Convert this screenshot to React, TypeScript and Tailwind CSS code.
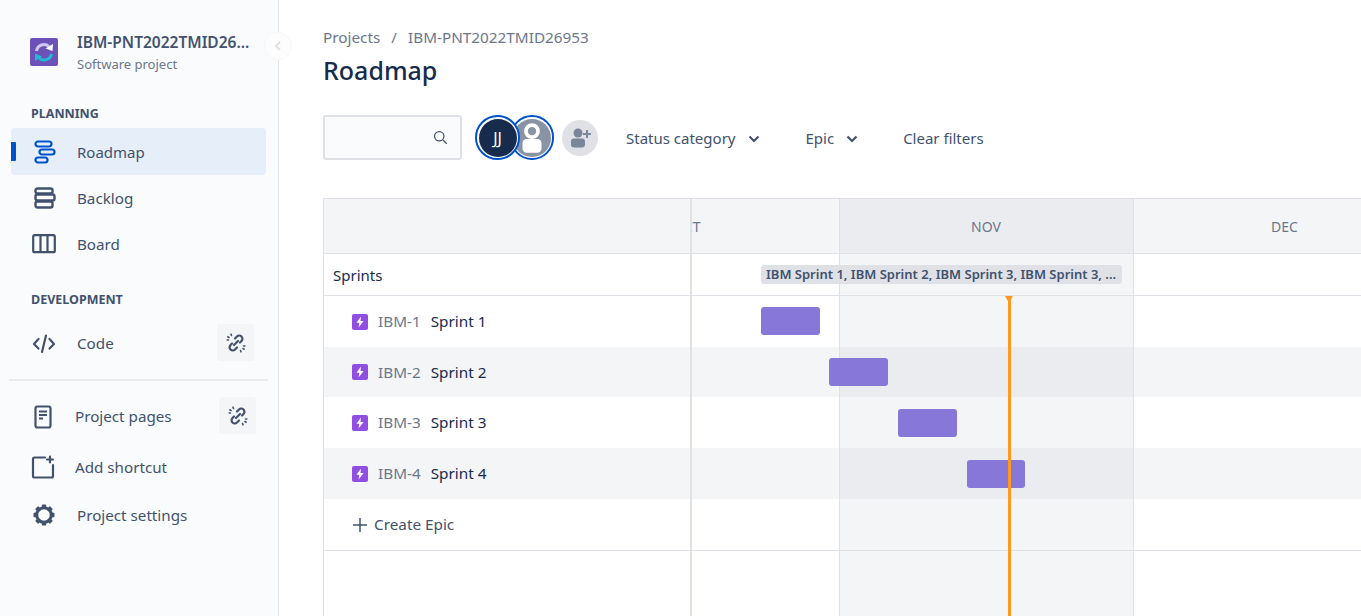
import type { ReactNode } from "react";

const font = { fontFamily: '"Noto Sans", sans-serif' };

const Svg = ({ children, className = "" }: { children: ReactNode; className?: string }) => (
  <svg viewBox="0 0 24 24" fill="none" stroke="currentColor" strokeWidth="2" className={className}>
    {children}
  </svg>
);

const RoadmapIcon = () => (
  <svg width="24" height="24" viewBox="0 0 24 24" fill="none" stroke="currentColor" strokeWidth="2.2">
    <rect x="2.5" y="1.5" width="16" height="5" rx="2.5" />
    <rect x="6.5" y="9.5" width="15" height="5" rx="2.5" />
    <rect x="2.5" y="17.5" width="12" height="5" rx="2.5" />
  </svg>
);

const BacklogIcon = () => (
  <svg width="24" height="24" viewBox="0 0 24 24" fill="none" stroke="currentColor" strokeWidth="2.4">
    <rect x="3.5" y="2.5" width="17" height="5" rx="2" />
    <rect x="3.5" y="8.500" width="19" height="6" rx="2" />
    <rect x="3.5" y="15.500" width="17" height="6" rx="2" />
  </svg>
);

const BoardIcon = () => (
  <svg width="24" height="20" viewBox="0 0 24 20" fill="none" stroke="currentColor" strokeWidth="2.2">
    <rect x="1.2" y="1.2" width="21.6" height="17" rx="1.5" />
    <path d="M8.5 1.5v16.5M15.5 1.5v16.5" />
  </svg>
);

const CodeIcon = () => (
  <svg width="24" height="24" viewBox="0 0 24 24" fill="none" stroke="currentColor" strokeWidth="2.2" strokeLinecap="round" strokeLinejoin="round">
    <path d="M6.5 7 2 12l4.500 4.500M17.500 7 22 12l-4.500 4.500M14 3.500 10 20" />
  </svg>
);

const PagesIcon = () => (
  <svg width="24" height="24" viewBox="0 0 24 24" fill="none" stroke="currentColor" strokeWidth="2.200">
    <rect x="4.500" y="1.500" width="15" height="21" rx="2" />
    <path d="M8 6.500h8M8 10h8M8 13.500h4" />
  </svg>
);

const ShortcutIcon = () => (
  <svg width="24" height="24" viewBox="0 0 24 24" fill="none" stroke="currentColor" strokeWidth="2.200" strokeLinecap="round">
    <path d="M14 2.500H3.500a1.500 1.500 0 0 0-1.500 1.500v17a1.500 1.500 0 0 0 1.500 1.500h17a1.500 1.500 0 0 0 1.500-1.500V10" />
    <path d="M19 1.500v6M16 4.500h6" />
  </svg>
);

const GearIcon = () => (
  <svg width="22" height="22" viewBox="0 0 22 22" fill="currentColor">
    <circle cx="11" cy="11" r="7.300" fill="none" stroke="currentColor" strokeWidth="3" />
    {[0, 45, 90, 135, 180, 225, 270, 315].map((deg) => (
      <rect key={deg} x="8.800" y="0.500" width="4.400" height="4.500" rx="1" transform={`rotate(${deg} 11 11)`} />
    ))}
  </svg>
);

const UnlinkButton = ({ className = "" }: { className?: string }) => (
  <div className={`flex h-[37px] w-[37px] items-center justify-center rounded-[3px] bg-[#f4f5f7] text-[#42526e] ${className}`}>
    <svg width="20" height="20" viewBox="0 0 20 20" fill="none" stroke="currentColor" strokeWidth="2.200" strokeLinecap="round">
      <path d="M9 5.500 11 3.500a3.200 3.200 0 0 1 4.500 0 3.200 3.200 0 0 1 0 4.500l-1.500 1.500M11 14.500 9 16.500a3.200 3.200 0 0 1-4.500 0 3.200 3.200 0 0 1 0-4.500L6 10.500M8 12l4-4" />
      <path d="M3 4.500 1.800 3.800M5.500 2.500 5 1.200M2.500 7H1.200M17 15.500l1.200.7M14.500 17.500l.5 1.300M17.500 13h1.300" strokeWidth="1.600" />
    </svg>
  </div>
);

const Chevron = ({ className = "" }: { className?: string }) => (
  <svg width="12" height="8" viewBox="0 0 12 8" fill="none" stroke="currentColor" strokeWidth="2.200" className={className}>
    <path d="m1.500 1.500 4.500 4.500 4.500-4.500" />
  </svg>
);

const NavItem = ({
  icon,
  label,
  iconWidth = "w-[66px]",
  height = "h-[46px]",
  iconClass = "pl-[21px]",
  children,
}: {
  icon: ReactNode;
  label: string;
  iconWidth?: string;
  height?: string;
  iconClass?: string;
  children?: ReactNode;
}) => (
  <div className={`flex items-center text-[#42526e] ${height}`}>
    <div className={`flex shrink-0 items-center ${iconWidth} ${iconClass}`}>{icon}</div>
    <span className="text-[15.200px]">{label}</span>
    {children}
  </div>
);

const Sidebar = () => (
  <aside className="relative flex h-full w-[279px] shrink-0 flex-col border-r border-[#e4e6ea] bg-[#fafbfc] pl-[11px] pr-[12px]">
    <div className="flex items-center pl-[19px] pt-[32px]">
      <svg width="28" height="28" viewBox="0 0 28 28" className="shrink-0">
        <rect width="28" height="28" rx="2" fill="#6c51b8" />
        <path d="M6.500 13a7.500 7.500 0 0 1 12.500-4.500" fill="none" stroke="#cfc6f2" strokeWidth="3" />
        <path d="M15.500 10.500 22.500 13l.5-7z" fill="#fff" />
        <path d="M21.500 16a7.500 7.500 0 0 1-12.500 4" fill="none" stroke="#22b8d6" strokeWidth="3" />
        <path d="M12 18.500 5 15.500v7.500z" fill="#22b8d6" />
      </svg>
      <div className="ml-[19px] flex flex-col">
        <span className="text-[15.500px] leading-[20px] font-semibold whitespace-nowrap text-[#42526e]">IBM-PNT2022TMID26...</span>
        <span className="mt-[4px] text-[13px] leading-[16px] text-[#6b778c]">Software project</span>
      </div>
    </div>

    <div className="mt-[34px] pl-[20px] text-[12.500px] leading-[16px] font-bold text-[#42526e]">PLANNING</div>
    <div className="relative mt-[6px] flex h-[47px] w-[255px] items-center rounded-[4px] bg-[#e6eff9] text-[#0052cc]">
      <span className="absolute top-[14px] left-0 h-[19px] w-[5px] rounded-r-[1px] bg-[#0052cc]" />
      <div className="flex w-[66px] shrink-0 pl-[22px]">
        <RoadmapIcon />
      </div>
      <span className="pt-[2px] text-[15px] text-[#42526e]">Roadmap</span>
    </div>
    <div>
      <NavItem icon={<BacklogIcon />} label="Backlog" />
      <NavItem icon={<BoardIcon />} label="Board" />
    </div>

    <div className="mt-[25px] pl-[20px] text-[12.500px] leading-[16px] font-bold text-[#42526e]">DEVELOPMENT</div>
    <NavItem icon={<CodeIcon />} label="Code" height="h-[37px] mt-[17px]">
      <UnlinkButton className="ml-auto mr-[12px] -mt-[2px]" />
    </NavItem>
    <div className="-ml-[2px] mt-[17px] h-[2px] w-[259px] bg-[#e9ebee]" />
    <div className="mt-[17px]">
      <NavItem icon={<PagesIcon />} label="Project pages" iconWidth="w-[64px]" iconClass="pl-[20px]" height="h-[37px]">
        <UnlinkButton className="ml-auto mr-[10px] -mt-[2px]" />
      </NavItem>
      <NavItem icon={<ShortcutIcon />} label="Add shortcut" iconWidth="w-[64px]" iconClass="pl-[20px]" height="h-[24px] mt-[20px]" />
      <NavItem icon={<GearIcon />} label="Project settings" iconWidth="w-[66px]" iconClass="pl-[22px]" height="h-[24px] mt-[24px]" />
    </div>

    <div className="absolute top-[32px] -right-[14px] flex h-[28px] w-[28px] items-center justify-center rounded-full border border-[#f6f7f8] bg-[#fdfdfe]">
      <svg width="8" height="10" viewBox="0 0 8 10" fill="none" stroke="#dfe1e6" strokeWidth="2">
        <path d="M6 1 2 5l4 4" />
      </svg>
    </div>
  </aside>
);

const Toolbar = () => (
  <div className="mt-[28px] flex items-center">
    <div className="flex h-[45px] w-[139px] items-center justify-end rounded-[3px] border-2 border-[#dfe1e6] bg-[#fafbfc] pr-[12px] text-[#42526e]">
      <Svg className="h-[15px] w-[15px]">
        <circle cx="10" cy="10" r="7.500" />
        <path d="m16 16 6 6" />
      </Svg>
    </div>
    <div className="ml-[13px] flex items-center">
      <div className="z-10 flex h-[45px] w-[45px] items-center justify-center rounded-full border-2 border-[#0052cc] bg-white">
        <div className="flex h-[38px] w-[38px] items-center justify-center rounded-full bg-[#172b4d] text-[16px] text-white">JJ</div>
      </div>
      <div className="-ml-[10px] flex h-[45px] w-[44px] items-center justify-center rounded-full border-2 border-[#0052cc] bg-white">
        <div className="flex h-[38px] w-[38px] items-center justify-center overflow-hidden rounded-full bg-[#8993a4]">
          <svg width="38" height="38" viewBox="0 0 36 36" fill="#fff">
            <path fillRule="evenodd" d="M18 4a7.500 7.500 0 1 1 0 15 7.500 7.500 0 0 1 0-15zm0 3.500a4 4 0 1 0 0 8 4 4 0 0 0 0-8z" />
            <rect x="9" y="19" width="18" height="13" rx="4" />
          </svg>
        </div>
      </div>
      <div className="ml-[8px] flex h-[36px] w-[36px] items-center justify-center rounded-full bg-[#dfe1e6]">
        <svg width="24" height="24" viewBox="0 0 24 24" fill="#7a869a">
          <circle cx="10" cy="7" r="4.500" />
          <rect x="3" y="12.500" width="14" height="9" rx="3" />
          <path d="M18 4h2v3h3v2h-3v3h-2V9h-3V7h3z" />
        </svg>
      </div>
    </div>
    <div className="ml-[28px] flex items-center pt-[2px] text-[15px] text-[#42526e]">
      <span>Status category</span>
      <Chevron className="ml-[13px]" />
      <span className="ml-[45px]">Epic</span>
      <Chevron className="ml-[12px]" />
      <span className="ml-[45px]">Clear filters</span>
    </div>
  </div>
);

const EpicIcon = () => (
  <div className="flex h-[16px] w-[16px] items-center justify-center rounded-[2px] bg-[#904ee2]">
    <svg width="12" height="12" viewBox="0 0 10 10" fill="#fff">
      <path d="M5.800 0.500 2 5.700h2.400L3.800 9.500 8 4.200H5.400z" />
    </svg>
  </div>
);

const rows = [
  { key: "IBM-1", name: "Sprint 1", h: "h-[51px]", shaded: false, bar: "left-[69px] top-[11px] w-[59px]" },
  { key: "IBM-2", name: "Sprint 2", h: "h-[50px]", shaded: true, bar: "left-[137px] top-[11px] w-[59px]" },
  { key: "IBM-3", name: "Sprint 3", h: "h-[51px]", shaded: false, bar: "left-[206px] top-[12px] w-[59px]" },
  { key: "IBM-4", name: "Sprint 4", h: "h-[51px]", shaded: true, bar: "left-[275px] top-[12px] w-[58px]" },
];

const Cells = ({ shaded = false, nov = "bg-[#f4f5f7]", children }: { shaded?: boolean; nov?: string; children?: ReactNode }) => (
  <div className={`relative flex h-full flex-1 border-l-2 border-[#dfe1e6] ${shaded ? "bg-[#f4f5f7]" : ""}`}>
    <div className="w-[147px] shrink-0" />
    <div className={`w-[295px] shrink-0 border-x border-[#dfe1e6] ${nov}`} />
    <div className="flex-1" />
    {children}
  </div>
);

const Timeline = () => (
  <div className="relative mt-[38px] flex-1 border-l border-[#dfe1e6] border-t text-[#172b4d]">
    <div className="flex h-[55px] border-b border-[#dfe1e6] bg-[#f4f5f7]">
      <div className="w-[366px] shrink-0" />
      <div className="flex h-full flex-1 overflow-hidden border-l-2 border-[#dfe1e6] text-[14px] text-[#6b778c]">
        <div className="flex w-[147px] shrink-0 items-center overflow-hidden">
          <span className="-ml-[19px]">OCT</span>
        </div>
        <div className="flex w-[295px] shrink-0 items-center justify-center border-x border-[#dfe1e6] bg-[#ebecf0] pr-[1px]">NOV</div>
        <div className="flex w-[301px] shrink-0 items-center justify-center">DEC</div>
      </div>
    </div>

    <div className="flex h-[42px] border-b border-[#dfe1e6]">
      <div className="flex w-[366px] shrink-0 items-center pl-[9px] pt-[2px] text-[15px]">Sprints</div>
      <Cells>
        <div className="absolute top-[11px] left-[69px] flex h-[19px] w-[361px] items-center rounded-[3px] bg-[#dfe1e6] pl-[5px] text-[13px] font-semibold whitespace-nowrap text-[#42526e]">
          IBM Sprint 1, IBM Sprint 2, IBM Sprint 3, IBM Sprint 3, ...
        </div>
      </Cells>
    </div>

    {rows.map((r) => (
      <div key={r.key} className={`flex ${r.h} ${r.shaded ? "bg-[#f4f5f7]" : ""}`}>
        <div className="flex w-[366px] shrink-0 items-center pl-[28px] text-[15.300px]">
          <EpicIcon />
          <span className="ml-[10px] text-[#6b778c]">{r.key}</span>
          <span className="ml-[10px]">{r.name}</span>
        </div>
        <Cells shaded={r.shaded} nov={r.shaded ? "bg-[#ebecf0]" : "bg-[#f4f5f7]"}>
          <div className={`absolute ${r.bar} h-[28px] rounded-[3px] bg-[#8777d9]`} />
        </Cells>
      </div>
    ))}

    <div className="flex h-[52px] border-b border-[#dfe1e6]">
      <div className="flex w-[366px] shrink-0 items-center pl-[28px] text-[15.300px] text-[#42526e]">
        <svg width="16" height="16" viewBox="0 0 16 16" stroke="currentColor" strokeWidth="1.500">
          <path d="M8 1v14M1 8h14" />
        </svg>
        <span className="ml-[6px]">Create Epic</span>
      </div>
      <Cells />
    </div>

    <div className="flex h-[80px]">
      <div className="w-[366px] shrink-0" />
      <Cells />
    </div>

    <div className="absolute top-[97px] bottom-0 left-[684px] w-[3px] bg-[#ff991f]">
      <div className="absolute top-0 -left-[3px] h-0 w-0 border-x-[4.500px] border-t-[7px] border-x-transparent border-t-[#ff991f]" />
    </div>
  </div>
);

export default function App() {
  return (
    <div className="flex h-[616px] w-[1361px] overflow-hidden bg-white" style={font}>
      <Sidebar />
      <main className="flex min-w-0 flex-1 flex-col pl-[44px]">
        <div className="mt-[27px] flex items-center text-[15.300px] leading-[20px] text-[#6b778c]">
          <span>Projects</span>
          <span className="mx-[11px]">/</span>
          <span>IBM-PNT2022TMID26953</span>
        </div>
        <h1 className="mt-[6px] text-[25px] leading-[34px] font-medium text-[#172b4d]">Roadmap</h1>
        <Toolbar />
        <Timeline />
      </main>
    </div>
  );
}
